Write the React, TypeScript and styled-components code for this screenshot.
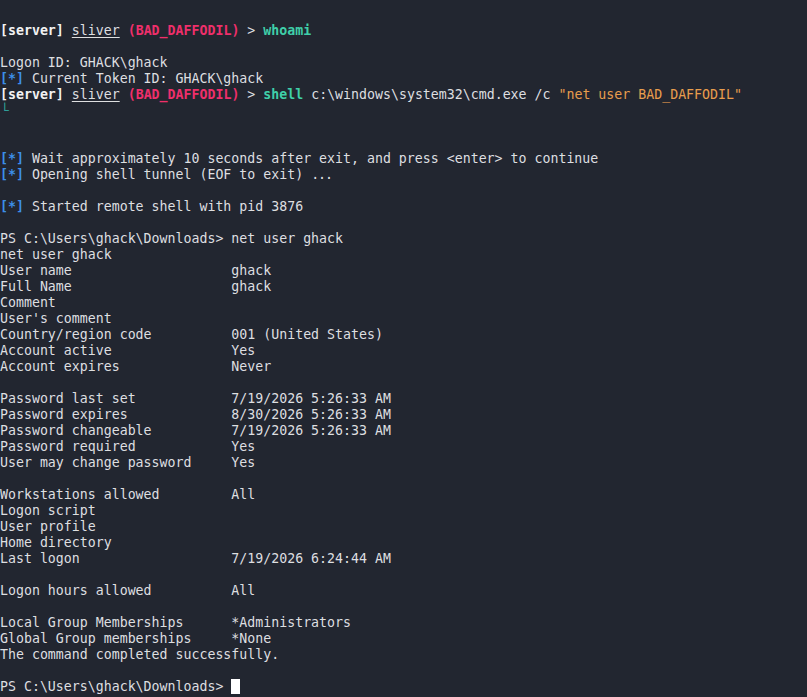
import React from "react";
import styled, { createGlobalStyle } from "styled-components";

const Global = createGlobalStyle`
  html, body { margin: 0; padding: 0; background: #222630; }
  body { width: 807px; height: 697px; overflow: hidden; }
`;

const Terminal = styled.div`
  background: #222630;
  width: 807px;
  height: 697px;
  box-sizing: border-box;
  padding-top: 23px;
  color: #dedfe0;
  font-family: "DejaVu Sans Mono", "Liberation Mono", monospace;
  font-size: 13.25px;
  line-height: 16px;
  display: flex;
  flex-direction: column;
`;

const Line = styled.div`
  height: 16px;
  white-space: pre;
`;

type Tone = "red" | "teal" | "blue" | "orange" | "white";
const colors: Record<Tone, string> = {
  red: "#ef2f6b",
  teal: "#3fcfa9",
  blue: "#3d8fe8",
  orange: "#e89d4d",
  white: "#f2f2f2",
};

const Span = styled.span<{ $tone?: Tone; $bold?: boolean; $under?: boolean }>`
  color: ${(p) => (p.$tone ? colors[p.$tone] : "inherit")};
  font-weight: ${(p) => (p.$bold ? 700 : 400)};
  text-decoration: ${(p) => (p.$under ? "underline" : "none")};
  text-underline-offset: 2px;
`;

const Corner = styled.span`
  color: #2f9e98;
  position: relative;
  top: 0px;
  left: 1px;
`;

const Ellipsis = styled.span`
  letter-spacing: -1px;
`;

const Cursor = styled.span`
  display: inline-block;
  width: 9px;
  height: 15px;
  background: #ffffff;
  vertical-align: -3px;
`;

const Prompt: React.FC = () => (
  <>
    <Span $tone="white" $bold>[server]</Span> <Span $under>sliver</Span>{" "}
    <Span $tone="red" $bold>(BAD_DAFFODIL)</Span> &gt;{" "}
  </>
);

const Star: React.FC = () => (
  <Span $tone="blue" $bold>[*]</Span>
);

const pad = (k: string, v: string) => (v ? k.padEnd(29, " ") + v : k);

const rows: [string, string][] = [
  ["User name", "ghack"],
  ["Full Name", "ghack"],
  ["Comment", ""],
  ["User's comment", ""],
  ["Country/region code", "001 (United States)"],
  ["Account active", "Yes"],
  ["Account expires", "Never"],
  ["", ""],
  ["Password last set", "7/19/2026 5:26:33 AM"],
  ["Password expires", "8/30/2026 5:26:33 AM"],
  ["Password changeable", "7/19/2026 5:26:33 AM"],
  ["Password required", "Yes"],
  ["User may change password", "Yes"],
  ["", ""],
  ["Workstations allowed", "All"],
  ["Logon script", ""],
  ["User profile", ""],
  ["Home directory", ""],
  ["Last logon", "7/19/2026 6:24:44 AM"],
  ["", ""],
  ["Logon hours allowed", "All"],
  ["", ""],
  ["Local Group Memberships", "*Administrators"],
  ["Global Group memberships", "*None"],
];

export default function App() {
  return (
    <>
      <Global />
      <Terminal>
        <Line>
          <Prompt />
          <Span $tone="teal" $bold>whoami</Span>
        </Line>
        <Line />
        <Line>Logon ID: GHACK\ghack</Line>
        <Line>
          <Star /> Current Token ID: GHACK\ghack
        </Line>
        <Line>
          <Prompt />
          <Span $tone="teal" $bold>shell</Span> c:\windows\system32\cmd.exe /c{" "}
          <Span $tone="orange">"net user BAD_DAFFODIL"</Span>
        </Line>
        <Line>
          <Corner>└</Corner>
        </Line>
        <Line />
        <Line />
        <Line>
          <Star /> Wait approximately 10 seconds after exit, and press &lt;enter&gt; to continue
        </Line>
        <Line>
          <Star /> Opening shell tunnel (EOF to exit) <Ellipsis>...</Ellipsis>
        </Line>
        <Line />
        <Line>
          <Star /> Started remote shell with pid 3876
        </Line>
        <Line />
        <Line>PS C:\Users\ghack\Downloads&gt; net user ghack</Line>
        <Line>net user ghack</Line>
        {rows.map(([k, v], i) => (
          <Line key={i}>{pad(k, v)}</Line>
        ))}
        <Line>The command completed successfully.</Line>
        <Line />
        <Line>
          PS C:\Users\ghack\Downloads&gt; <Cursor />
        </Line>
      </Terminal>
    </>
  );
}
